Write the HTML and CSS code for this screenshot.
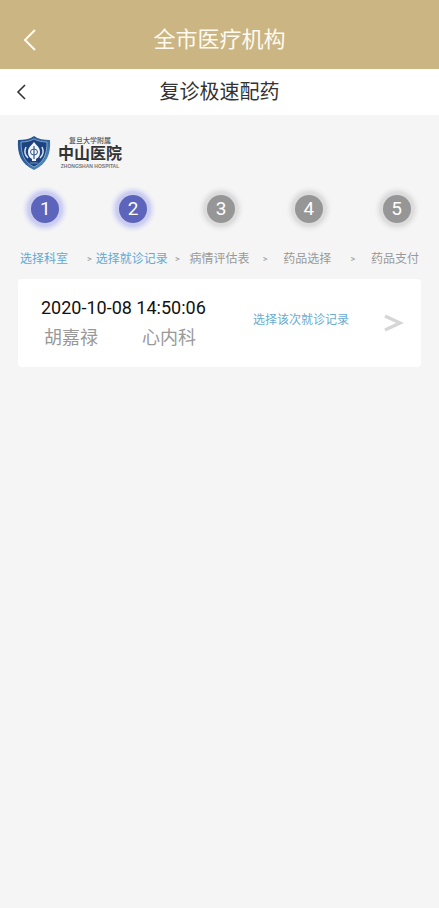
FILE: index.html
```html
<!DOCTYPE html>
<html lang="zh-CN">
<head>
<meta charset="utf-8">
<meta name="viewport" content="width=device-width, initial-scale=1">
<title>复诊极速配药</title>
<link rel="stylesheet" href="styles.css">
</head>
<body>
<header class="app-bar">
  <button class="back" type="button" aria-label="返回">
    <svg width="14" height="24" viewBox="0 0 14 24"><path d="M12 2 2 12l10 10" fill="none" stroke="currentColor" stroke-width="2"/></svg>
  </button>
  <div class="app-title">全市医疗机构</div>
</header>
<nav class="page-bar">
  <button class="back" type="button" aria-label="返回上一页">
    <svg width="10" height="16" viewBox="0 0 10 16"><path d="M9 1 2 8l7 7" fill="none" stroke="currentColor" stroke-width="1.6"/></svg>
  </button>
  <h1 class="page-title">复诊极速配药</h1>
</nav>
<main>
  <div class="brand">
    <svg class="shield" width="34" height="36" viewBox="0 0 34 36" aria-hidden="true">
      <defs>
        <linearGradient id="rim" x1="0" y1="0" x2="1" y2="1">
          <stop offset="0" stop-color="#24508a"/>
          <stop offset=".5" stop-color="#2d619d"/>
          <stop offset="1" stop-color="#65a0cc"/>
        </linearGradient>
      </defs>
      <path d="M17 1c4 3 10 4 16 4 1 14-3 24-16 30C4 29 0 19 1 5c6 0 12-1 16-4z" fill="url(#rim)"/>
      <path d="M17 4c4 2 8 3 13 3 0 12-3 20-13 25C7 27 4 19 4 7c5 0 9-1 13-3z" fill="#1c427f" stroke="#a9c6e0" stroke-width=".7"/>
      <path d="M17 7c2 3 6 5 6 10 0 4-2 6-4 7v2h-4v-2c-2-1-4-3-4-7 0-5 4-7 6-10z" fill="#f1f5fb"/>
      <path d="M9 12c-2 4-1 8 2 11M25 12c2 4 1 8-2 11" fill="none" stroke="#d4e0ee" stroke-width="1.5"/>
      <path d="M17 11v13" stroke="#31598f" stroke-width="1.2"/>
      <ellipse cx="17" cy="17" rx="3.5" ry="3" fill="none" stroke="#31598f"/>
      <path d="M13 28h8" stroke="#6f97c2"/>
    </svg>
    <div class="brand-text">
      <span class="brand-top">复旦大学附属</span>
      <span class="brand-name">中山医院</span>
      <span class="brand-en">ZHONGSHAN HOSPITAL</span>
    </div>
  </div>
  <ol class="steps">
    <li class="step done"><span class="num">1</span><span class="label">选择科室</span><span class="sep">&gt;</span></li>
    <li class="step done"><span class="num">2</span><span class="label">选择就诊记录</span><span class="sep">&gt;</span></li>
    <li class="step"><span class="num">3</span><span class="label">病情评估表</span><span class="sep">&gt;</span></li>
    <li class="step"><span class="num">4</span><span class="label">药品选择</span><span class="sep">&gt;</span></li>
    <li class="step"><span class="num">5</span><span class="label">药品支付</span></li>
  </ol>
  <article class="record">
    <div class="visit">
      <time class="time" datetime="2020-10-08T14:50:06">2020-10-08 14:50:06</time>
      <div class="details"><span>胡嘉禄</span><span>心内科</span></div>
    </div>
    <a class="choose" href="#record">选择该次就诊记录</a>
    <svg class="arrow" width="20" height="20" viewBox="0 0 20 20" aria-hidden="true"><path d="M1 3l15 7-15 7" fill="none" stroke="currentColor" stroke-width="3.5"/></svg>
  </article>
</main>
</body>
</html>
```
FILE: styles.css
```css
* {
  box-sizing: border-box;
}

body {
  margin: 0;
  min-height: 100vh;
  background: #f5f5f5;
  color: #333;
  font-family: Roboto, "Noto Sans CJK SC", sans-serif;
}

.app-bar,
.page-bar {
  display: grid;
  grid-template-columns: 48px 1fr 48px;
  align-items: center;
}

.app-bar {
  height: 69px;
  padding-top: 10px;
  background: #cbb583;
  color: #fffaf0;
}

.page-bar {
  height: 46px;
  background: #fff;
}

.back {
  display: flex;
  padding: 0;
  border: 0;
  background: none;
  color: inherit;
}

.app-bar .back {
  padding-left: 23px;
}

.page-bar .back {
  padding-left: 16px;
}

.app-title,
.page-title {
  margin: 0;
  font-weight: 400;
  text-align: center;
}

.app-title {
  font-size: 22px;
  line-height: 32px;
}

.page-title {
  font-size: 20px;
  line-height: 28px;
}

.brand {
  display: flex;
  gap: 7px;
  padding: 20px 17px 0;
}

.shield {
  display: block;
}

.brand-text {
  display: flex;
  flex-direction: column;
  align-items: center;
  padding-top: 2px;
}

.brand-top {
  color: #555;
  font-size: 7px;
  font-weight: 500;
  line-height: 8px;
}

.brand-name {
  color: #333;
  font-size: 16px;
  font-weight: 700;
  line-height: 18px;
}

.brand-en {
  color: #777;
  font-family: "Liberation Sans", sans-serif;
  font-size: 5px;
  font-weight: 700;
  line-height: 6px;
}

.steps {
  display: grid;
  grid-template-columns: repeat(5, 1fr);
  margin: 0;
  padding: 24px 0 0;
  list-style: none;
}

.step {
  display: grid;
  grid-template-columns: 1fr auto 1fr;
  row-gap: 27px;
  align-items: center;
  color: #999;
}

.num {
  grid-column: 1 / -1;
  justify-self: center;
  width: 28px;
  height: 28px;
  margin-left: 3px;
  border-radius: 50%;
  background: #969696;
  box-shadow: 0 0 2px 4px #dcdcdc, 0 0 3px 7px #ebebeb;
  color: #fff;
  font-size: 19px;
  line-height: 28px;
  text-align: center;
}

.done .num {
  background: #5c64bb;
  box-shadow: 0 0 2px 4px #cbcdf0, 0 0 3px 7px #e0e1f6;
}

.label {
  grid-column: 2;
  font-size: 12px;
  line-height: 18px;
  white-space: nowrap;
}

.done .label {
  color: #62a9d3;
}

.sep {
  justify-self: end;
  margin-right: -4px;
  font-size: 9px;
  line-height: 18px;
}

.record {
  display: flex;
  align-items: center;
  margin: 11px 18px 0;
  padding: 14px 17px 14px 23px;
  border-radius: 4px;
  background: #fff;
}

.time {
  display: block;
  color: #111;
  font-size: 18px;
  line-height: 30px;
}

.details {
  display: flex;
  gap: 44px;
  padding-left: 3px;
  color: #999;
  font-size: 18px;
  line-height: 30px;
}

.choose {
  margin: 0 35px 6px auto;
  color: #68abd0;
  font-size: 12px;
  line-height: 18px;
  text-decoration: none;
}

.arrow {
  color: #d6d6d6;
}
```
